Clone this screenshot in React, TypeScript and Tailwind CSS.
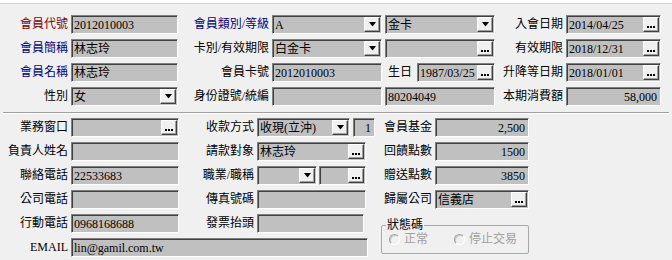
import React from 'react';

type BtnKind = 'drop' | 'more';

const DropBtn = () => (
    <div className="flex h-full w-[16px] shrink-0 items-center justify-center border border-t-white border-l-white border-r-[#404040] border-b-[#404040] bg-[#f0f0f0] shadow-[inset_-1px_-1px_0_#a0a0a0]">
        <svg width="7" height="5" viewBox="0 0 7 5">
            <polygon points="0,0 7,0 3.5,4.5" fill="#000" />
        </svg>
    </div>
);

const MoreBtn = () => (
    <div className="flex h-full w-[16px] shrink-0 items-end justify-center gap-[1px] border border-t-white border-l-white border-r-[#404040] border-b-[#404040] bg-[#f0f0f0] pb-[3px] shadow-[inset_-1px_-1px_0_#a0a0a0]">
        <span className="h-[2px] w-[2px] bg-black" />
        <span className="h-[2px] w-[2px] bg-black" />
        <span className="h-[2px] w-[2px] bg-black" />
    </div>
);

const Field = ({ className = '', value = '', right = false, btn }: { className?: string; value?: string; right?: boolean; btn?: BtnKind }) => (
    <div className={`flex h-[19px] shrink-0 border border-t-[#808080] border-l-[#808080] border-b-white border-r-white bg-[#c0c0c0] shadow-[inset_1px_1px_0_#404040] ${className}`}>
        <div className="flex min-w-0 flex-1 items-stretch pt-[1px] pl-[1px] pr-[1px] pb-[1px]">
            <span className={`flex min-w-0 flex-1 items-center overflow-hidden whitespace-nowrap text-[12px] leading-none text-black ${right ? 'justify-end pr-[2px]' : 'pl-[1px]'}`}>
                {value}
            </span>
            {btn === 'drop' && <DropBtn />}
            {btn === 'more' && <MoreBtn />}
        </div>
    </div>
);

const Label = ({ className = '', children }: { className?: string; children: React.ReactNode }) => (
    <div className={`shrink-0 whitespace-nowrap pr-[3px] text-right text-[12px] leading-[19px] ${className}`}>{children}</div>
);

const Row = ({ children }: { children: React.ReactNode }) => <div className="flex h-[19px] items-center">{children}</div>;

const Radio = ({ label }: { label: string }) => (
    <div className="flex items-center gap-[4px]">
        <span className="h-[11px] w-[11px] rounded-full border border-t-[#a0a0a0] border-l-[#a0a0a0] border-b-white border-r-white bg-[#f0f0f0] shadow-[inset_1px_1px_0_#c8c8c8]" />
        <span className="text-[12px] leading-none text-[#a0a0a0]">{label}</span>
    </div>
);

export default function App() {
    return (
        <div className="h-[260px] w-[672px] overflow-hidden bg-[#f0f0f0] font-['Liberation_Serif','Noto_Sans_CJK_TC',serif] text-black">
            <div className="h-[4px] border-b border-[#d4d4d4] bg-white" />

            {/* member header */}
            <div className="flex flex-col gap-[5px] pt-[11px]">
                <Row>
                    <Label className="w-[71px] text-[#800000]">會員代號</Label>
                    <Field className="w-[107px]" value="2012010003" />
                    <Label className="w-[94px] text-[#000080]">會員類別/等級</Label>
                    <Field className="w-[110px]" value="A" btn="drop" />
                    <Field className="ml-[3px] w-[110px]" value="金卡" btn="drop" />
                    <Label className="w-[71px]">入會日期</Label>
                    <Field className="w-[95px]" value="2014/04/25" btn="more" />
                </Row>
                <Row>
                    <Label className="w-[71px] text-[#000080]">會員簡稱</Label>
                    <Field className="w-[107px]" value="林志玲" />
                    <Label className="w-[94px]">卡別/有效期限</Label>
                    <Field className="w-[110px]" value="白金卡" btn="drop" />
                    <Field className="ml-[3px] w-[110px]" btn="more" />
                    <Label className="w-[71px]">有效期限</Label>
                    <Field className="w-[95px]" value="2018/12/31" btn="more" />
                </Row>
                <Row>
                    <Label className="w-[71px] text-[#000080]">會員名稱</Label>
                    <Field className="w-[107px]" value="林志玲" />
                    <Label className="w-[94px]">會員卡號</Label>
                    <Field className="w-[110px]" value="2012010003" />
                    <Label className="w-[35px] pr-[5px]">生日</Label>
                    <Field className="w-[78px]" value="1987/03/25" btn="more" />
                    <Label className="w-[71px]">升降等日期</Label>
                    <Field className="w-[95px]" value="2018/01/01" btn="more" />
                </Row>
                <Row>
                    <Label className="w-[71px]">性別</Label>
                    <Field className="w-[107px]" value="女" btn="drop" />
                    <Label className="w-[94px]">身份證號/統編</Label>
                    <Field className="w-[110px]" />
                    <Field className="ml-[3px] w-[110px]" value="80204049" />
                    <Label className="w-[71px]">本期消費額</Label>
                    <Field className="w-[95px]" value="58,000" right />
                </Row>
            </div>

            <div className="mx-[3px] mt-[6px] border-t border-b border-t-[#a0a0a0] border-b-white" />

            {/* contact & billing */}
            <div className="flex pt-[4px]">
                <div className="flex w-[375px] flex-col gap-[5px]">
                    <Row>
                        <Label className="w-[71px]">業務窗口</Label>
                        <Field className="w-[108px]" btn="more" />
                        <Label className="w-[78px]">收款方式</Label>
                        <Field className="w-[93px]" value="收現(立沖)" btn="drop" />
                        <Field className="ml-[3px] w-[22px]" value="1" right />
                    </Row>
                    <Row>
                        <Label className="w-[71px]">負責人姓名</Label>
                        <Field className="w-[108px]" />
                        <Label className="w-[78px]">請款對象</Label>
                        <Field className="w-[109px]" value="林志玲" btn="more" />
                    </Row>
                    <Row>
                        <Label className="w-[71px]">聯絡電話</Label>
                        <Field className="w-[108px]" value="22533683" />
                        <Label className="w-[78px]">職業/職稱</Label>
                        <Field className="w-[60px]" btn="drop" />
                        <Field className="ml-[2px] w-[47px]" btn="more" />
                    </Row>
                    <Row>
                        <Label className="w-[71px]">公司電話</Label>
                        <Field className="w-[108px]" />
                        <Label className="w-[78px]">傳真號碼</Label>
                        <Field className="w-[109px]" />
                    </Row>
                    <Row>
                        <Label className="w-[71px]">行動電話</Label>
                        <Field className="w-[108px]" value="0968168688" />
                        <Label className="w-[78px]">發票抬頭</Label>
                        <Field className="w-[107px]" />
                    </Row>
                    <Row>
                        <Label className="w-[71px]">EMAIL</Label>
                        <Field className="w-[297px]" value="lin@gamil.com.tw" />
                    </Row>
                </div>

                <div className="ml-[6px] flex w-[148px] flex-col gap-[5px]">
                    <Row>
                        <Label className="w-[54px]">會員基金</Label>
                        <Field className="w-[94px]" value="2,500" right />
                    </Row>
                    <Row>
                        <Label className="w-[54px]">回饋點數</Label>
                        <Field className="w-[94px]" value="1500" right />
                    </Row>
                    <Row>
                        <Label className="w-[54px]">贈送點數</Label>
                        <Field className="w-[94px]" value="3850" right />
                    </Row>
                    <Row>
                        <Label className="w-[54px]">歸屬公司</Label>
                        <Field className="w-[94px]" value="信義店" btn="more" />
                    </Row>
                    {/* status group box */}
                    <div className="mt-[11px] flex h-[29px] flex-col rounded-[2px] border border-[#a8a8a8] px-[7px]">
                        <span className="-mt-[8px] ml-[-3px] h-[14px] self-start bg-[#f0f0f0] px-[1px] text-[12px] leading-[14px]">狀態碼</span>
                        <div className="mt-[1px] flex items-center gap-[26px]">
                            <Radio label="正常" />
                            <Radio label="停止交易" />
                        </div>
                    </div>
                </div>
            </div>
        </div>
    );
}
